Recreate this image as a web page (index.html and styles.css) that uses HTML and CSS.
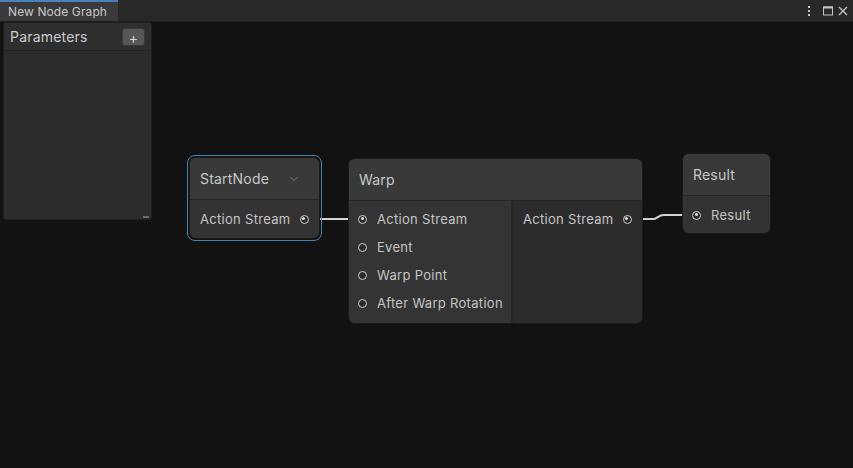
FILE: index.html
```html
<!DOCTYPE html>
<html>
<head>
<meta charset="utf-8">
<link rel="stylesheet" href="styles.css">
</head>
<body>
<div class="window">
  <div class="tabbar">
    <div class="tab">New Node Graph</div>
    <div class="tab-actions">
      <svg class="ico kebab" width="8" height="12" viewBox="0 0 8 12"><rect x="3" y="1" width="2" height="2" fill="#c4c4c4"/><rect x="3" y="5" width="2" height="2" fill="#c4c4c4"/><rect x="3" y="9" width="2" height="2" fill="#c4c4c4"/></svg>
      <svg class="ico" width="12" height="12" viewBox="0 0 12 12"><rect x="1.5" y="2" width="9" height="8" fill="none" stroke="#c4c4c4" stroke-width="1"/><rect x="1" y="1.5" width="10" height="2" fill="#c4c4c4"/></svg>
      <svg class="ico" width="12" height="12" viewBox="0 0 12 12"><path d="M2 2 L10 10 M10 2 L2 10" stroke="#c4c4c4" stroke-width="1.4"/></svg>
    </div>
  </div>
  <div class="canvas">
    <svg class="edges" width="853" height="446" viewBox="0 22 853 446">
      <path d="M309 219 H316" stroke="#6c6c6c" stroke-width="2" fill="none"/>
      <path d="M316 219 H351" stroke="#d2d2d2" stroke-width="2" fill="none"/>
      <path d="M351 219 H359" stroke="#6c6c6c" stroke-width="2" fill="none"/>
      <path d="M632 219 H643" stroke="#6c6c6c" stroke-width="2" fill="none"/>
      <path d="M643 219 H653 C657 219 658 215 664 215 H684" stroke="#d2d2d2" stroke-width="2" fill="none"/>
      <path d="M684 215 H692" stroke="#6c6c6c" stroke-width="2" fill="none"/>
    </svg>

    <div class="blackboard">
      <div class="bb-header">
        <span class="bb-title">Parameters</span>
        <span class="bb-add">+</span>
      </div>
      <div class="bb-body"></div>
      <div class="bb-grip"></div>
    </div>

    <div class="selected start">
      <div class="node">
        <div class="node-title">StartNode
          <svg class="chev" width="10" height="6" viewBox="0 0 10 6"><path d="M1.5 1 L5 4.5 L8.5 1" stroke="#5c5c5c" stroke-width="1.3" fill="none"/></svg>
        </div>
        <div class="node-body single">
          <div class="port out"><span class="label">Action Stream</span><span class="dot on"></span></div>
        </div>
      </div>
    </div>

    <div class="node warp">
      <div class="node-title">Warp</div>
      <div class="node-body cols">
        <div class="inputs">
          <div class="port in"><span class="dot on"></span><span class="label">Action Stream</span></div>
          <div class="port in"><span class="dot"></span><span class="label">Event</span></div>
          <div class="port in"><span class="dot"></span><span class="label">Warp Point</span></div>
          <div class="port in"><span class="dot"></span><span class="label">After Warp Rotation</span></div>
        </div>
        <div class="outputs">
          <div class="port out"><span class="label">Action Stream</span><span class="dot on"></span></div>
        </div>
      </div>
    </div>

    <div class="node result">
      <div class="node-title">Result</div>
      <div class="node-body single">
        <div class="port in"><span class="dot on"></span><span class="label">Result</span></div>
      </div>
    </div>
  </div>
</div>
</body>
</html>
```

FILE: styles.css
```css
* { box-sizing: border-box; }
html, body { margin: 0; padding: 0; }
body {
  background: #111111;
  font-family: Inter, "Noto Sans", sans-serif;
  color: #c4c4c4;
  width: 853px;
  height: 468px;
  overflow: hidden;
}
.window {
  display: flex;
  flex-direction: column;
  height: 468px;
}
.tabbar {
  height: 22px;
  background: #282828;
  display: flex;
  align-items: stretch;
  border-bottom: 1px solid #1e1e1e;
}
.tab {
  width: 118px;
  background: #3a3a3a;
  border-top: 2px solid #4a7ebc;
  font-size: 12px;
  letter-spacing: 0.1px;
  line-height: 19px;
  padding-left: 8px;
  color: #c8c8c8;
}
.tab-actions {
  margin-left: auto;
  display: flex;
  align-items: center;
  gap: 3px;
  padding-right: 4px;
}
.kebab { margin-right: 6px; }
.ico { display: block; }
.canvas {
  flex: 1;
  position: relative;
  background: #121212;
}
.edges {
  position: absolute;
  left: 0;
  top: 0;
}
.blackboard {
  position: absolute;
  left: 3px;
  top: 0px;
  width: 149px;
  height: 198px;
  background: #2c2c2c;
  border: 1px solid #1f1f1f;
  border-radius: 3px;
  display: flex;
  flex-direction: column;
}
.bb-header {
  height: 28px;
  display: flex;
  align-items: center;
  justify-content: space-between;
  padding: 0 6px 0 6px;
  border-bottom: 1px solid #232323;
  background: #2e2e2e;
}
.bb-title { font-size: 14px; letter-spacing: 0.2px; color: #cccccc; }
.bb-add {
  width: 23px;
  height: 18px;
  background: #565656;
  border-radius: 3px;
  color: #d8d8d8;
  font-size: 14px;
  line-height: 17px;
  text-align: center;
  border: 1px solid #3a3a3a;
}
.bb-body { flex: 1; }
.bb-grip {
  position: absolute;
  right: 2px;
  bottom: 1px;
  width: 6px;
  height: 2px;
  background: #6a6a6a;
}
.selected {
  position: absolute;
  border: 1px solid #3f86b3;
  border-radius: 8px;
  padding: 2px;
}
.start { left: 187px; top: 133px; width: 135px; height: 86px; }
.node {
  background: #333333;
  border-radius: 6px;
  display: flex;
  flex-direction: column;
  overflow: hidden;
  box-shadow: 0 0 0 1px #1a1a1a;
}
.start .node { height: 100%; }
.node-title {
  background: #393939;
  font-size: 14px;
  letter-spacing: 0.2px;
  color: #c8c8c8;
  padding-left: 10px;
  display: flex;
  align-items: center;
  border-bottom: 1px solid #252525;
}
.chev { margin-left: auto; margin-right: 20px; }
.start .node-title { height: 42px; }
.warp {
  position: absolute;
  left: 349px;
  top: 137px;
  width: 293px;
  height: 164px;
}
.warp .node-title { height: 42px; }
.result {
  position: absolute;
  left: 683px;
  top: 132px;
  width: 87px;
  height: 79px;
}
.result .node-title { height: 42px; }
.node-body { flex: 1; }
.single { padding-top: 5px; }
.cols { display: flex; }
.inputs {
  width: 164px;
  background: #343434;
  border-right: 2px solid #272727;
  padding-top: 4px;
}
.outputs {
  flex: 1;
  background: #2c2c2c;
  padding-top: 4px;
}
.port {
  height: 28px;
  display: flex;
  align-items: center;
  font-size: 13px;
  letter-spacing: 0.3px;
  color: #c4c4c4;
}
.port.in { padding-left: 9px; }
.port.in .label { margin-left: 10px; }
.port.out { padding-left: 10px; }
.port.out .label { margin-right: 9px; }
.dot {
  width: 9px;
  height: 9px;
  border-radius: 50%;
  border: 1.5px solid #cfcfcf;
  background: #2a2a2a;
  position: relative;
  flex: none;
}
.dot.on::after {
  content: "";
  position: absolute;
  left: 1.5px;
  top: 1.5px;
  width: 3px;
  height: 3px;
  border-radius: 50%;
  background: #e0e0e0;
}
```
